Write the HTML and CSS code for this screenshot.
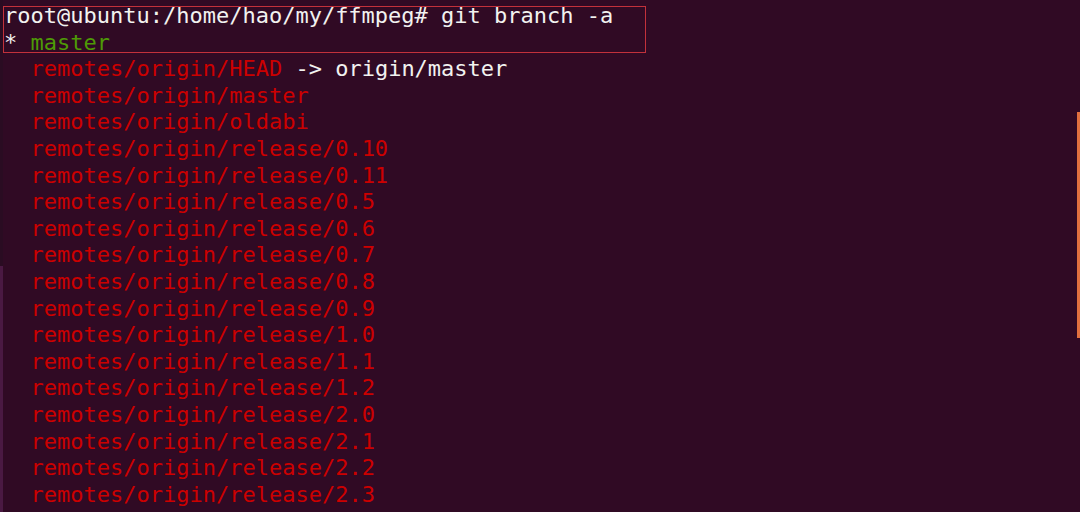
FILE: index.html
```html
<!DOCTYPE html>
<html>
<head>
<meta charset="utf-8">
<link rel="stylesheet" href="styles.css">
</head>
<body>
<div class="screen">
  <div class="edge">
    <div class="edge-top"></div>
    <div class="edge-bottom"></div>
  </div>
  <div class="term">
    <div class="highlight"></div>
    <div class="line"><span class="w">root@ubuntu:/home/hao/my/ffmpeg# git branch -a</span></div>
    <div class="line"><span class="w">* </span><span class="g">master</span></div>
    <div class="line">  <span class="r">remotes/origin/HEAD</span><span class="w"> -&gt; origin/master</span></div>
    <div class="line">  <span class="r">remotes/origin/master</span></div>
    <div class="line">  <span class="r">remotes/origin/oldabi</span></div>
    <div class="line">  <span class="r">remotes/origin/release/0.10</span></div>
    <div class="line">  <span class="r">remotes/origin/release/0.11</span></div>
    <div class="line">  <span class="r">remotes/origin/release/0.5</span></div>
    <div class="line">  <span class="r">remotes/origin/release/0.6</span></div>
    <div class="line">  <span class="r">remotes/origin/release/0.7</span></div>
    <div class="line">  <span class="r">remotes/origin/release/0.8</span></div>
    <div class="line">  <span class="r">remotes/origin/release/0.9</span></div>
    <div class="line">  <span class="r">remotes/origin/release/1.0</span></div>
    <div class="line">  <span class="r">remotes/origin/release/1.1</span></div>
    <div class="line">  <span class="r">remotes/origin/release/1.2</span></div>
    <div class="line">  <span class="r">remotes/origin/release/2.0</span></div>
    <div class="line">  <span class="r">remotes/origin/release/2.1</span></div>
    <div class="line">  <span class="r">remotes/origin/release/2.2</span></div>
    <div class="line">  <span class="r">remotes/origin/release/2.3</span></div>
  </div>
  <div class="scroll">
    <div class="thumb"></div>
  </div>
</div>
</body>
</html>
```

FILE: styles.css
```css
html, body {
  margin: 0;
  padding: 0;
  background: #300a24;
  overflow: hidden;
}
.screen {
  width: 1080px;
  height: 512px;
  display: flex;
  position: relative;
  background: #300a24;
  overflow: hidden;
}
.edge {
  width: 3px;
  display: flex;
  flex-direction: column;
}
.edge-top {
  height: 266px;
  background: #2a0c22;
}
.edge-bottom {
  flex: 1;
  background: #4a1942;
}
.term {
  flex: 1;
  position: relative;
  padding: 3px 0 0 1px;
  font-family: "DejaVu Sans Mono", "Liberation Mono", monospace;
  font-size: 22px;
  line-height: 26.6px;
  color: #eeeeec;
}
.line {
  height: 26.6px;
  white-space: pre;
}
.w { color: #f2f2f0; }
.r { color: #cc0000; }
.g { color: #4e9a06; }
.highlight {
  position: absolute;
  left: 0;
  top: 6px;
  width: 641px;
  height: 45px;
  border: 1px solid #c2313b;
}
.scroll {
  width: 3px;
  padding-top: 112px;
}
.thumb {
  height: 226px;
  background: #e0703f;
}
```
